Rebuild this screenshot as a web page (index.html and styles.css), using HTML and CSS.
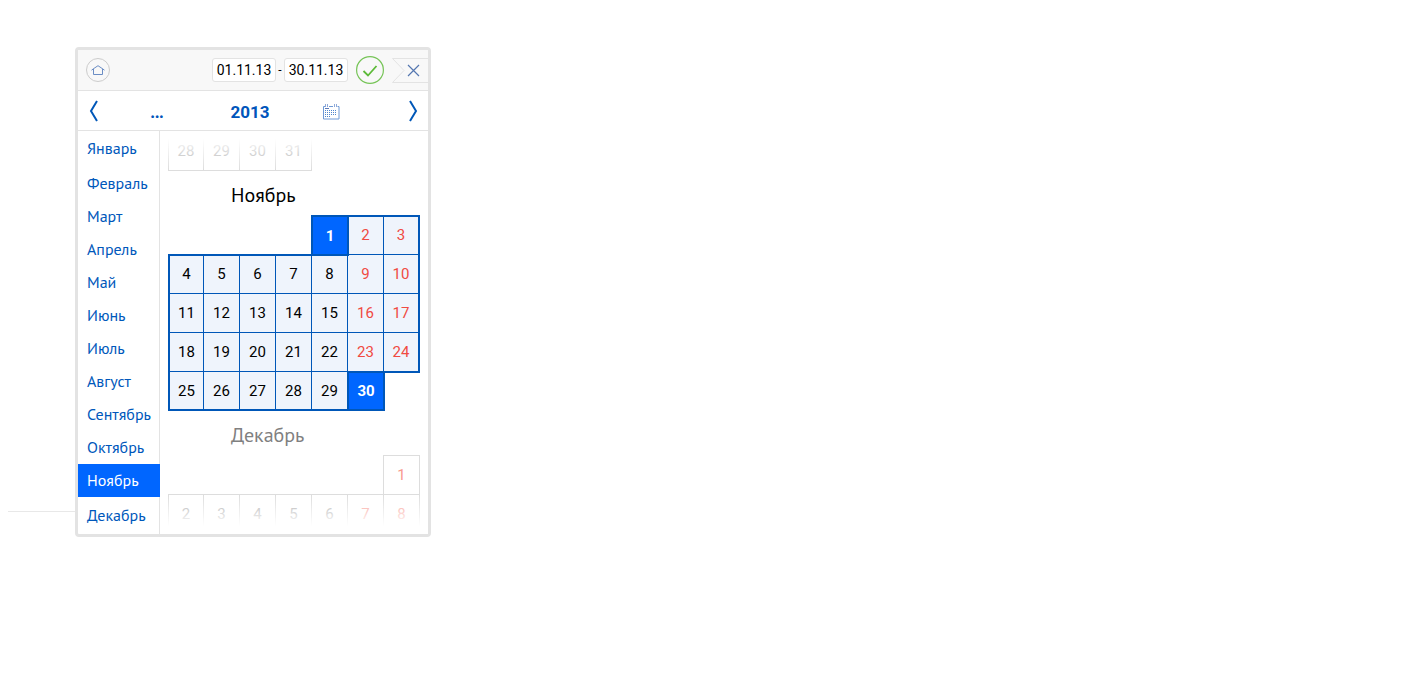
FILE: index.html
```
<!DOCTYPE html>
<html lang="ru">
<head>
<meta charset="utf-8">
<title>Календарь</title>
<link rel="stylesheet" href="styles.css">
</head>
<body>
<main class="page">
  <hr class="rule">
  <section class="picker" aria-label="Выбор периода">
    <header class="bar">
      <button class="home" type="button" aria-label="Сегодня">
        <svg width="14" height="10" viewBox="0 0 14 10"><path d="M.5 5.2 3 3.4 7 .7l4 2.7 2.5 1.8M2.500 4v5.500h9V4"/></svg>
      </button>
      <div class="range">
        <input class="date" type="text" value="01.11.13" aria-label="Начало периода">
        <span class="dash">-</span>
        <input class="date" type="text" value="30.11.13" aria-label="Конец периода">
      </div>
      <button class="apply" type="button" aria-label="Применить">
        <svg width="28" height="28" viewBox="0 0 28 28"><circle cx="14" cy="14" r="13.4"/><path class="tick" d="m7.500 15 4.500 4.500L20.500 10"/></svg>
      </button>
      <button class="close" type="button" aria-label="Закрыть">
        <svg width="36" height="25" viewBox="0 0 36 25"><path class="tag" d="M36 .5H.5L12 12.500.5 24.500H36"/><path class="cross" d="m16 7 11 11m0-11-11 11"/></svg>
      </button>
    </header>
    <nav class="years">
      <button class="arrow" type="button" aria-label="Назад"><svg width="11" height="22" viewBox="0 0 11 22"><path d="M8 1 2 11l6 10"/></svg></button>
      <button class="year more" type="button">...</button>
      <button class="year" type="button">2013</button>
      <button class="all" type="button" aria-label="Календарь">
        <svg width="17" height="16" viewBox="0 0 17 16"><path class="frame" d="M2 2.500H.5v12.500h15.500V2.500h-1.500M6 2.500h4"/><path class="rings" d="M2.500 0v3M4.500 0v3M11.500 0v3M13.500 0v3"/><path class="head" d="M2 4.500h4"/><path class="dots" d="M2 6.500h12M2 8.500h12M2 10.500h12M2 12.500h6"/></svg>
      </button>
      <button class="arrow" type="button" aria-label="Вперёд"><svg width="11" height="22" viewBox="0 0 11 22"><path d="m3 1 6 10-6 10"/></svg></button>
    </nav>
    <div class="content">
      <div class="months">
        <button type="button">Январь</button>
        <button type="button">Февраль</button>
        <button type="button">Март</button>
        <button type="button">Апрель</button>
        <button type="button">Май</button>
        <button type="button">Июнь</button>
        <button type="button">Июль</button>
        <button type="button">Август</button>
        <button type="button">Сентябрь</button>
        <button type="button">Октябрь</button>
        <button class="current" type="button">Ноябрь</button>
        <button type="button">Декабрь</button>
      </div>
      <div class="days">
        <table class="month">
          <tr><td class="left"><button type="button">28</button></td><td><button type="button">29</button></td><td><button type="button">30</button></td><td><button type="button">31</button></td></tr>
        </table>
        <table class="month active">
          <caption>Ноябрь</caption>
          <tr><th colspan="4"></th><td class="picked"><button type="button">1</button></td><td class="top off"><button type="button">2</button></td><td class="top right off"><button type="button">3</button></td></tr>
          <tr><td class="top left"><button type="button">4</button></td><td class="top"><button type="button">5</button></td><td class="top"><button type="button">6</button></td><td class="top"><button type="button">7</button></td><td class="top"><button type="button">8</button></td><td class="off"><button type="button">9</button></td><td class="right off"><button type="button">10</button></td></tr>
          <tr><td class="left"><button type="button">11</button></td><td><button type="button">12</button></td><td><button type="button">13</button></td><td><button type="button">14</button></td><td><button type="button">15</button></td><td class="off"><button type="button">16</button></td><td class="right off"><button type="button">17</button></td></tr>
          <tr><td class="left"><button type="button">18</button></td><td><button type="button">19</button></td><td><button type="button">20</button></td><td><button type="button">21</button></td><td><button type="button">22</button></td><td class="off"><button type="button">23</button></td><td class="right off under"><button type="button">24</button></td></tr>
          <tr class="last"><td class="left"><button type="button">25</button></td><td><button type="button">26</button></td><td><button type="button">27</button></td><td><button type="button">28</button></td><td><button type="button">29</button></td><td class="picked"><button type="button">30</button></td></tr>
        </table>
        <table class="month">
          <caption>Декабрь</caption>
          <tr><th colspan="6"></th><td class="first off"><button type="button">1</button></td></tr>
          <tr><td class="top left"><button type="button">2</button></td><td class="top"><button type="button">3</button></td><td class="top"><button type="button">4</button></td><td class="top"><button type="button">5</button></td><td class="top"><button type="button">6</button></td><td class="top off"><button type="button">7</button></td><td class="off"><button type="button">8</button></td></tr>
        </table>
      </div>
    </div>
  </section>
</main>
</body>
</html>
```
FILE: styles.css
```
* { box-sizing: border-box; }

body {
  margin: 0;
  background: #fff;
  color: #000;
  font-family: Roboto, "Liberation Sans", sans-serif;
}

.page {
  display: flex;
  align-items: flex-end;
  padding: 47px 8px 0;
}

.rule {
  width: 67px;
  margin: 0 0 25px;
  border: 0;
  border-top: 1px solid #e8e8e8;
}

.picker {
  margin-right: auto;
  border: 3px solid #e3e3e3;
  border-radius: 4px;
  background: #fff;
}

button {
  display: flex;
  align-items: center;
  justify-content: center;
  margin: 0;
  padding: 0;
  border: 0;
  background: none;
  color: inherit;
  font: inherit;
  cursor: pointer;
}

svg { display: block; fill: none; }

.bar {
  display: flex;
  align-items: center;
  gap: 8px;
  height: 41px;
  padding-left: 8px;
  border-bottom: 1px solid #e3e3e3;
  background: #f8f8f8;
}

.home {
  width: 24px;
  height: 24px;
  border: 1px solid #ccc;
  border-radius: 50%;
}

.home svg { stroke: #6b8dc4; }

.range {
  display: flex;
  align-items: center;
  margin-left: auto;
}

.date {
  width: 64px;
  height: 24px;
  padding: 0;
  border: 1px solid #e3e3e3;
  border-radius: 3px;
  background: #fff;
  color: #000;
  font: 14px Roboto, "Liberation Sans", sans-serif;
  text-align: center;
}

.dash { width: 8px; font-size: 12px; text-align: center; }

.apply svg { stroke: #76c457; stroke-width: 1.2; }
.apply .tick { stroke: #5cba38; stroke-width: 1.8; }

.tag { stroke: #e3e3e3; }
.cross { stroke: #5577b0; stroke-width: 1.2; }

.years {
  display: grid;
  grid-template-columns: 32px 94px 92px 70px 1fr 32px;
  align-items: center;
  height: 40px;
  border-bottom: 1px solid #e3e3e3;
}

.arrow:last-child { grid-column: 6; }
.arrow svg { stroke: #0057b8; stroke-width: 2; }

.year {
  padding-top: 2px;
  color: #0055bb;
  font-size: 17px;
  font-weight: 700;
  line-height: 24px;
}

.more { font-family: "PT Sans", "Noto Sans", sans-serif; }

.all { padding-top: 2px; }
.frame { stroke: #6f9ad6; }
.rings { stroke: #8fa9d8; }
.head { stroke: #5b78b8; }
.dots { stroke: #4f86cc; stroke-dasharray: 1 1; }

.content { display: flex; }

.months {
  display: flex;
  flex-direction: column;
  width: 82px;
  border-right: 1px solid #e3e3e3;
}

.months button {
  justify-content: flex-start;
  height: 33px;
  padding: 0 0 2px 9px;
  color: #0058bb;
  font: 16px "PT Sans", "Noto Sans", sans-serif;
}

.months button:first-child { height: 36px; }
.months button:last-child { height: 37px; }

.months .current {
  margin-right: -1px;
  background: #06f;
  color: #fff;
}

.days {
  position: relative;
  padding: 1px 8px 0;
}

.days::before,
.days::after {
  content: "";
  position: absolute;
  left: 0;
  right: 0;
  height: 39px;
  pointer-events: none;
}

.days::before {
  top: 0;
  background: linear-gradient(#fff 20%, rgba(255, 255, 255, 0));
}

.days::after {
  bottom: 0;
  background: linear-gradient(rgba(255, 255, 255, 0), #fff 80%);
}

.month {
  border-spacing: 0;
  color: #aaa;
}

.month caption {
  height: 45px;
  padding-left: 63px;
  color: #808080;
  font: 20px/48px "PT Sans", "Noto Sans", sans-serif;
  text-align: left;
}

.month th { padding: 0; }

.month td {
  width: 36px;
  min-width: 36px;
  height: 39px;
  padding: 0;
  border: 0 solid #ddd;
  border-width: 0 1px 1px 0;
  font-size: 15px;
}

.month button {
  width: 100%;
  height: 36px;
}

.month td.left { border-left-width: 1px; }
.month td.top { box-shadow: 0 -1px #ddd; }
.month td.first { box-shadow: 0 -1px #ddd, -1px 0 #ddd, -1px -1px #ddd; }
.month .off { color: #f99a90; }

.active { color: #000; }
.active caption { color: #000; }
.active td { border-color: #0057b8; background: #eff4fc; }
.active .off { color: #f04a42; }
.active td.left { border-left-width: 2px; }
.active td.right { border-right-width: 2px; }
.active td.top { box-shadow: inset 0 1px #0057b8, 0 -1px #0057b8; }
.active tr + tr td.top { box-shadow: inset 0 1px #0057b8, 0 -1px #0057b8; }
.active td.under { box-shadow: 0 1px #0057b8; }
.active .last td { border-bottom-width: 2px; }

.active td.picked {
  position: relative;
  border: 1px solid #0057b8;
  box-shadow: 0 0 0 1px #0057b8;
  background: #06f;
  color: #fff;
  font-weight: 700;
}

.active .last td.picked {
  border-bottom-width: 2px;
  box-shadow: 0 -1px #0057b8, -1px 0 #0057b8, 1px 0 #0057b8;
}
```
